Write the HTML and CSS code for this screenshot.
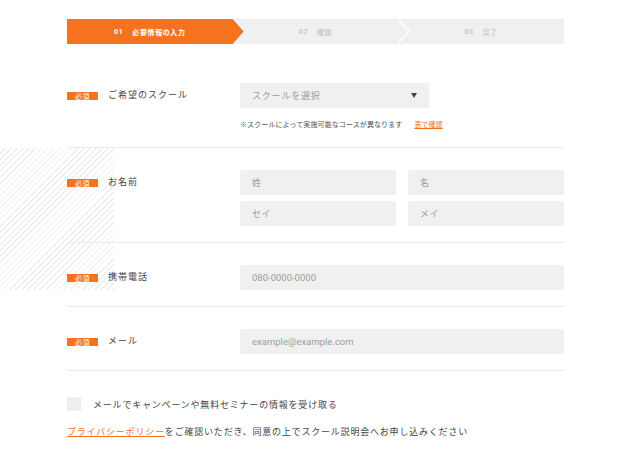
FILE: index.html
```html
<!DOCTYPE html>
<html lang="ja">
<head>
<meta charset="utf-8">
<link rel="stylesheet" href="styles.css">
</head>
<body>
<div class="page">
  <div class="stripes"></div>
  <ol class="steps">
    <li class="step step-active"><span class="num">01</span>必要情報の入力</li>
    <li class="step step-mid"><span class="num">02</span>確認</li>
    <li class="step"><span class="num">03</span>完了</li>
  </ol>

  <div class="row row-first">
    <div class="label"><span class="badge">必須</span><span class="label-text">ご希望のスクール</span></div>
    <div class="fields">
      <div class="field select">スクールを選択<span class="caret"></span></div>
      <p class="note">※スクールによって実施可能なコースが異なります<a class="note-link" href="#">表で確認</a></p>
    </div>
  </div>

  <div class="row">
    <div class="label"><span class="badge">必須</span><span class="label-text">お名前</span></div>
    <div class="fields grid2">
      <div class="field">姓</div>
      <div class="field">名</div>
      <div class="field">セイ</div>
      <div class="field">メイ</div>
    </div>
  </div>

  <div class="row">
    <div class="label"><span class="badge">必須</span><span class="label-text">携帯電話</span></div>
    <div class="fields">
      <div class="field latin">080-0000-0000</div>
    </div>
  </div>

  <div class="row">
    <div class="label"><span class="badge">必須</span><span class="label-text">メール</span></div>
    <div class="fields">
      <div class="field latin">example@example.com</div>
    </div>
  </div>

  <div class="check-row"><span class="checkbox"></span><span class="check-text">メールでキャンペーンや無料セミナーの情報を受け取る</span></div>
  <p class="privacy"><a class="privacy-link" href="#">プライバシーポリシー</a>をご確認いただき、同意の上でスクール説明会へお申し込みください</p>
</div>
</body>
</html>
```

FILE: styles.css
```css
* { box-sizing: border-box; }
html, body { margin: 0; padding: 0; background: #fff; }
body {
  font-family: "Noto Sans CJK JP", "Noto Sans", sans-serif;
  color: #444;
}
.page {
  position: relative;
  z-index: 0;
  width: 640px;
  padding: 19px 76px 0 67px;
}
.stripes {
  position: absolute;
  left: 0;
  top: 148px;
  width: 114px;
  height: 142px;
  z-index: -1;
  background: repeating-linear-gradient(135deg, #fff 0 3.2px, #eeeeee 3.2px 4.3px);
}
.steps {
  list-style: none;
  margin: 0 0 17px;
  padding: 0;
  display: flex;
  height: 25px;
  background: #f0f0f0;
}
.step {
  position: relative;
  flex: 1;
  display: flex;
  align-items: center;
  justify-content: center;
  font-size: 7px;
  font-weight: bold;
  letter-spacing: 0.6px;
  color: #c9c9c9;
}
.step .num { margin-right: 9px; font-family: "Roboto", sans-serif; }
.step-active { background: #f5731e; color: #fff; z-index: 2; }
.step-active::after {
  content: "";
  position: absolute;
  top: 0;
  right: -11px;
  width: 11px;
  height: 25px;
  background: #f5731e;
  clip-path: polygon(0 0, 100% 50%, 0 100%);
}
.step-mid::before,
.step-mid::after {
  content: "";
  position: absolute;
  top: 0;
  width: 12px;
  height: 25px;
  clip-path: polygon(0 0, 100% 50%, 0 100%);
}
.step-mid::before { right: -12px; background: #fff; z-index: 1; }
.step-mid::after { right: -10px; background: #f0f0f0; z-index: 1; }

.row {
  display: flex;
  padding: 22px 0 16px;
  border-bottom: 1px solid #ececec;
}
.row-first { padding-bottom: 18px; }
.label {
  width: 173px;
  height: 25px;
  display: flex;
  align-items: center;
  flex-shrink: 0;
}
.badge {
  width: 31px;
  height: 8px;
  background: #f5731e;
  color: #fff;
  font-size: 7px;
  line-height: 8px;
  text-align: center;
  letter-spacing: 0.5px;
  margin-right: 10px;
}
.label-text {
  font-size: 9px;
  letter-spacing: 1px;
  color: #444;
  margin-top: -2px;
}
.fields { flex: 1; }
.grid2 {
  display: grid;
  grid-template-columns: 1fr 1fr;
  column-gap: 12px;
  row-gap: 6px;
}
.field {
  height: 25px;
  background: #f0f0f0;
  border-radius: 2px;
  display: flex;
  align-items: center;
  padding-left: 12px;
  font-size: 9px;
  letter-spacing: 0.6px;
  color: #9d9d9d;
}
.field.latin {
  font-family: "Roboto", "Noto Sans CJK JP", sans-serif;
  font-size: 9.5px;
  letter-spacing: 0;
}
.select {
  width: 189px;
  position: relative;
  letter-spacing: 0.8px;
}
.caret {
  position: absolute;
  right: 12px;
  top: 10px;
  width: 0;
  height: 0;
  border-left: 3.5px solid transparent;
  border-right: 3.5px solid transparent;
  border-top: 5px solid #444;
}
.note {
  margin: 11px 0 0;
  font-size: 7px;
  line-height: 10px;
  letter-spacing: 0.1px;
  color: #555;
}
.note-link {
  margin-left: 12px;
  color: #f5731e;
  text-decoration: underline;
}
.check-row {
  display: flex;
  align-items: center;
  margin-top: 26px;
}
.checkbox {
  width: 14px;
  height: 14px;
  background: #eeeeee;
  border-radius: 1px;
  margin-right: 12px;
}
.check-text, .privacy {
  font-size: 9px;
  letter-spacing: 0.8px;
  color: #444;
}
.privacy {
  margin: 14px 0 0;
  line-height: 14px;
}
.privacy-link {
  color: #f5731e;
  text-decoration: underline;
}
```
